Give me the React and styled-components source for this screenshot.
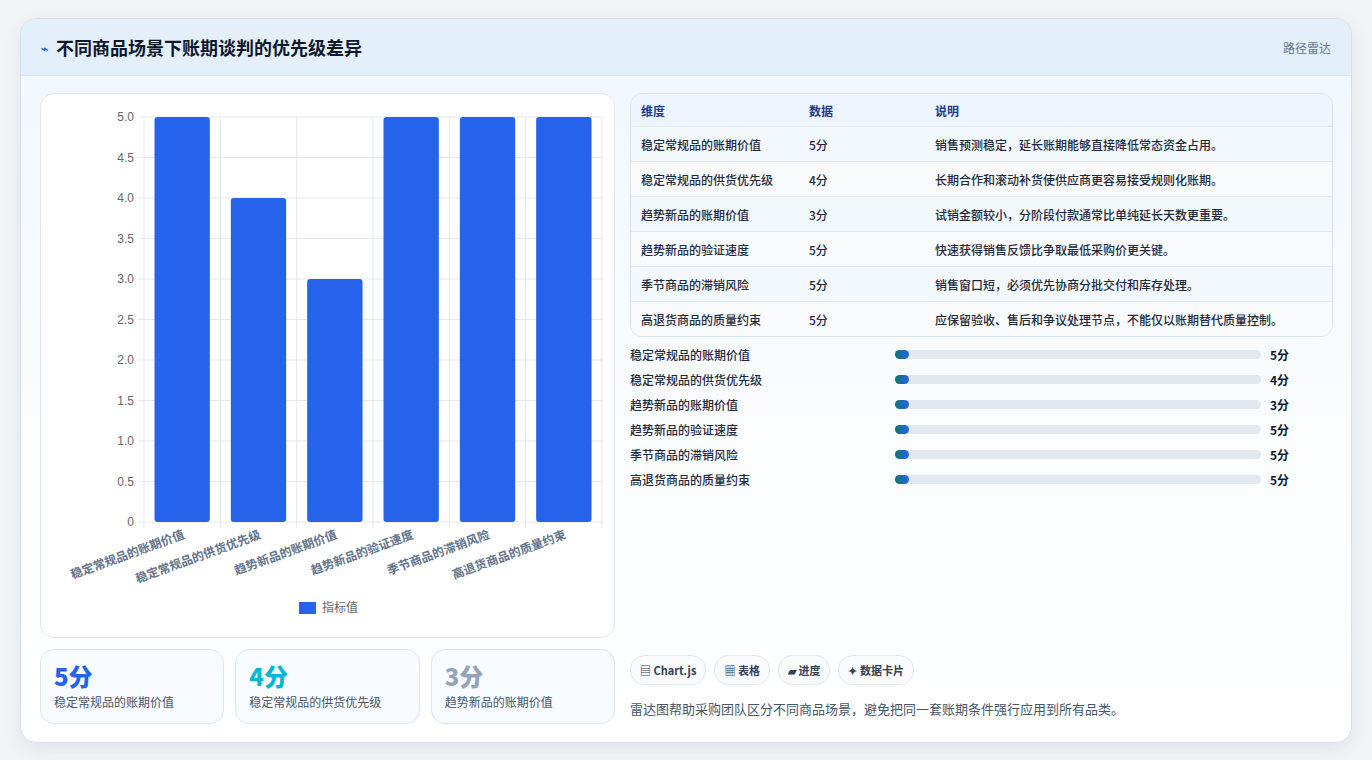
import React from "react";
import styled, { createGlobalStyle } from "styled-components";

const G = createGlobalStyle`
  body{margin:0;background:#f1f3f6;font-family:"Noto Sans CJK SC","Noto Sans",sans-serif;}
`;
const Page = styled.div`padding:18px 20px 20px 20px;`;
const Card = styled.div`
  border:1px solid #cfe3f3;border-radius:16px;overflow:hidden;
  background:linear-gradient(180deg,#f0f7fe 0%,#fbfdff 60%,#ffffff 100%);
  box-shadow:0 6px 18px rgba(30,60,110,.08);
`;
const Header = styled.div`
  height:56px;display:flex;align-items:center;justify-content:space-between;
  padding:0 20px 0 20px;background:#e3f0fc;border-bottom:1px solid #d6e7f6;
`;
const Title = styled.h1`margin:0;font-size:18px;font-weight:700;color:#0f172a;display:flex;align-items:center;gap:8px;`;
const Sub = styled.span`font-size:12px;color:#64748b;`;
const Body = styled.div`display:grid;grid-template-columns:575px 1fr;gap:15px;padding:17px 18px 18px 19px;`;
const Col = styled.div`display:flex;flex-direction:column;gap:11px;`;
const Panel = styled.div`background:#fff;border:1px solid #dde7f2;border-radius:14px;height:543px;`;
const Stats = styled.div`display:grid;grid-template-columns:repeat(3,1fr);gap:11px;`;
const Stat = styled.div`border:1px solid #dbe6f3;border-radius:14px;background:#f8fbff;padding:11px 13px;height:51px;`;
const Big = styled.div`font-size:24px;font-weight:800;color:${p=>p.c};line-height:30px;`;
const Small = styled.div`font-size:12px;color:#475569;margin-top:2px;`;
const Table = styled.div`border:1px solid #d5e2ef;border-radius:12px;overflow:hidden;background:#fff;`;
const Row = styled.div`display:grid;grid-template-columns:168px 126px 1fr;height:${p=>p.h?32:34}px;align-items:center;padding-left:10px;
  font-size:12px;color:${p=>p.h?"#1e3a8a":"#1e293b"};font-weight:${p=>p.h?600:500};
  background:${p=>p.h?"#eef5fe":p.alt?"#f8fafc":"#f3f8fc"};border-top:${p=>p.h?"none":"1px solid #e2e8f0"};`;
const Bars = styled.div`display:flex;flex-direction:column;gap:7px;margin-top:8px;`;
const BarRow = styled.div`display:grid;grid-template-columns:265px 366px 1fr;align-items:center;height:18px;font-size:12px;color:#1e293b;font-weight:500;`;
const Track = styled.div`height:9px;border-radius:5px;background:#e2e8f0;position:relative;`;
const Fill = styled.div`position:absolute;left:0;top:0;bottom:0;width:14px;border-radius:5px;background:linear-gradient(90deg,#0f766e,#2563eb);`;
const Val = styled.span`padding-left:9px;font-weight:700;color:#0f172a;`;
const Chips = styled.div`display:flex;gap:8px;margin-top:auto;`;
const Chip = styled.span`font-size:11px;font-weight:700;color:#334155;padding:6px 9px;border:1px solid #e2e8f0;border-radius:14px;background:#f8fafc;`;
const Note = styled.p`margin:14px 0 6px;font-size:13px;color:#475569;`;

const cats=["稳定常规品的账期价值","稳定常规品的供货优先级","趋势新品的账期价值","趋势新品的验证速度","季节商品的滞销风险","高退货商品的质量约束"];
const vals=[5,4,3,5,5,5];
const descs=["销售预测稳定，延长账期能够直接降低常态资金占用。","长期合作和滚动补货使供应商更容易接受规则化账期。","试销金额较小，分阶段付款通常比单纯延长天数更重要。","快速获得销售反馈比争取最低采购价更关键。","销售窗口短，必须优先协商分批交付和库存处理。","应保留验收、售后和争议处理节点，不能仅以账期替代质量控制。"];

function Chart(){
  const L=103,R=561,T=23,B=428,cw=(R-L)/6,ph=(B-T);
  const ticks=[0,0.5,1,1.5,2,2.5,3,3.5,4,4.5,5];
  return <svg width="575" height="543" style={{display:"block"}} fontFamily="Liberation Sans, Noto Sans CJK SC, sans-serif">
    {ticks.map(t=>{const y=B-t/5*ph;return <g key={t}><line x1={L-6} x2={R} y1={y} y2={y} stroke="#e5e7eb"/><text x={L-10} y={y+4} fontSize="12" fill="#666" textAnchor="end">{t===0?"0":t.toFixed(1)}</text></g>})}
    {[0,1,2,3,4,5,6].map(i=><line key={i} x1={L+i*cw} x2={L+i*cw} y1={T} y2={B+6} stroke="#e5e7eb"/>)}
    {vals.map((v,i)=>{const h=v/5*ph;return <rect key={i} x={L+i*cw+10.5} y={B-h} width={cw-21} height={h} rx="3" fill="#2563eb"/>})}
    {cats.map((c,i)=><text key={i} transform={`translate(${L+i*cw+cw/2+3},${B+16}) rotate(-20)`} textAnchor="end" fontSize="12" fontWeight="700" fill="#64748b">{c}</text>)}
    <rect x="258" y="508" width="17" height="12" fill="#2563eb"/>
    <text x="281" y="518" fontSize="12" fill="#666">指标值</text>
  </svg>;
}

export default function App(){
  return <Page><G/><Card>
    <Header><Title><span style={{color:"#2563eb",fontSize:12}}>⌁</span>不同商品场景下账期谈判的优先级差异</Title><Sub>路径雷达</Sub></Header>
    <Body>
      <Col>
        <Panel><Chart/></Panel>
        <Stats>
          <Stat><Big c="#2563eb">5分</Big><Small>稳定常规品的账期价值</Small></Stat>
          <Stat><Big c="#06b6d4">4分</Big><Small>稳定常规品的供货优先级</Small></Stat>
          <Stat><Big c="#94a3b8">3分</Big><Small>趋势新品的账期价值</Small></Stat>
        </Stats>
      </Col>
      <Col style={{gap:0}}>
        <Table>
          <Row h>< span>维度</span><span>数据</span><span>说明</span></Row>
          {cats.map((c,i)=><Row key={i} alt={i%2===1}><span>{c}</span><span>{vals[i]}分</span><span>{descs[i]}</span></Row>)}
        </Table>
        <Bars>
          {cats.map((c,i)=><BarRow key={i}><span>{c}</span><Track><Fill/></Track><Val>{vals[i]}分</Val></BarRow>)}
        </Bars>
        <Chips><Chip>▤ Chart.js</Chip><Chip>▦ 表格</Chip><Chip>▰ 进度</Chip><Chip>✦ 数据卡片</Chip></Chips>
        <Note>雷达图帮助采购团队区分不同商品场景，避免把同一套账期条件强行应用到所有品类。</Note>
      </Col>
    </Body>
  </Card></Page>;
}
